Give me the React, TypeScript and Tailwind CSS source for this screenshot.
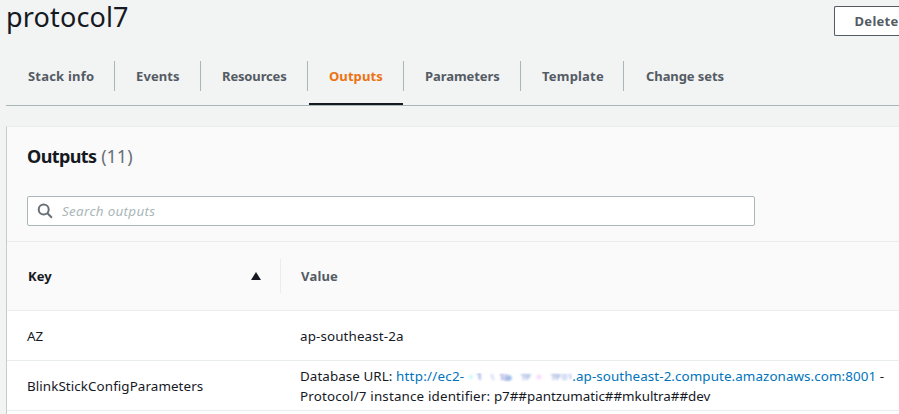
import React from "react";

const tabs = [
  { label: "Stack info", box: "w-[109px] pl-[22px]", text: "tracking-[0.2px]" },
  { label: "Events", box: "w-[86px] pl-[21px]", text: "tracking-[0.1px]" },
  { label: "Resources", box: "w-[107px] pl-[21px]", text: "tracking-[-0.15px]" },
  { label: "Outputs", box: "w-[96px] pl-[21px]", text: "tracking-[0.08px]", active: true },
  { label: "Parameters", box: "w-[117px] pl-[21px]", text: "tracking-[-0.08px]" },
  { label: "Template", box: "w-[103px] pl-[21px]", text: "tracking-[0.2px]" },
  { label: "Change sets", box: "w-[120px] pl-[22px]", text: "tracking-[-0.08px]", last: true },
];

function RedactedHost() {
  return (
    <svg className="inline-block h-[14px] w-[108px] align-[-3px]" viewBox="0 0 108 14">
      <defs>
        <filter id="soft"><feGaussianBlur stdDeviation="1" /></filter>
      </defs>
      <g filter="url(#soft)">
        <ellipse cx="7" cy="7" rx="2" ry="2" fill="#c4f8fc" />
        <path d="M13 4h3v3h-2M16 8v2" fill="none" stroke="#b5c4ec" strokeWidth="2" />
        <path d="M28 4v3l2 3" fill="none" stroke="#cfd9f8" strokeWidth="2" />
        <path d="M36 5h3l-1 4h3M42 4v6h3v-5" fill="none" stroke="#b7b9e6" strokeWidth="2" />
        <ellipse cx="45" cy="8" rx="3" ry="2.5" fill="#9dbfe8" />
        <path d="M57 5h4l-2 5M63 10v-5h4M63 7h3" fill="none" stroke="#bccaea" strokeWidth="2" />
        <ellipse cx="75" cy="7" rx="2.5" ry="2.5" fill="#f8daf9" />
        <path d="M87 5h4l-2 5M93 10v-5h4M93 7h3" fill="none" stroke="#bec9e8" strokeWidth="2" />
        <path d="M99 5h3v4h-3zM104 5h3v3h-2" fill="none" stroke="#cdd7f5" strokeWidth="2" />
      </g>
    </svg>
  );
}

export default function App() {
  return (
    <div className="flex h-[414px] w-[899px] flex-col overflow-hidden bg-[#f2f3f3] pl-[6px] font-['Noto_Sans',sans-serif] text-[13px] leading-5 text-[#16191f]">
      <header className="flex h-[61px] shrink-0 justify-between">
        <h1 className="text-[27px] leading-[33px] tracking-[0.15px]">protocol7</h1>
        <button className="mt-[6px] flex h-[30px] w-[65px] shrink-0 items-center whitespace-nowrap rounded-l-[2px] border border-r-0 border-[#545b64] bg-white pl-[19.5px] font-bold text-[#545b64]">
          <span className="tracking-[0.3px]">Delete</span>
        </button>
      </header>
      <nav className="flex h-[45px] shrink-0 border-b border-[#aab7b8]">
        {tabs.map((t) => (
          <div key={t.label} className={`${t.box} relative h-[30px] shrink-0 whitespace-nowrap font-bold leading-[30px] ${t.last ? "" : "border-r border-[#aab7b8]"} ${t.active ? "text-[#ec7211]" : "text-[#545b64]"}`}>
            <span className={t.text}>{t.label}</span>
            {t.active && <i className="absolute -bottom-[14px] left-px right-0 h-[2px] bg-[#16191f]" />}
          </div>
        ))}
      </nav>
      <main className="mt-5 flex flex-1 flex-col border-l border-t border-l-[#c5cccd] border-t-[#eaeded] bg-white">
        <section className="h-[115px] shrink-0 border-b border-[#eaeded] bg-[#fafafa] pl-5">
          <h2 className="h-[69px] pt-[18px] text-[18px] leading-[22px]">
            <b className="tracking-[-0.6px]">Outputs</b> <span className="text-[#687078]">(11)</span>
          </h2>
          <div className="flex h-[30px] w-[728px] items-center rounded-[2px] border border-[#aab7b8] bg-white pl-[9px]">
            <svg className="h-4 w-4 shrink-0" viewBox="0 0 16 16" fill="none" stroke="#687078" strokeWidth="2">
              <circle cx="6.7" cy="6.5" r="5" />
              <path d="m10.2 10 4.7 4.7" />
            </svg>
            <span className="ml-[9px] text-[13.4px] italic tracking-[0.32px] text-[#aab7b8]">Search outputs</span>
          </div>
        </section>
        <section className="flex h-[69px] shrink-0 items-center border-b border-[#eaeded] bg-[#fafafa] font-bold">
          <div className="flex h-[34px] w-[274px] items-center justify-between border-r border-[#eaeded] pl-[21px] pr-[19px]">
            <span className="tracking-[0.1px]">Key</span>
            <svg className="h-2 w-[10px]" viewBox="0 0 10 8"><path d="M5 0 10 8H0Z" fill="#16191f" /></svg>
          </div>
          <span className="ml-5 tracking-[0.2px] text-[#545b64]">Value</span>
        </section>
        <section className="flex h-[50px] shrink-0 items-center border-b border-[#eaeded] pl-5 text-[13.4px]">
          <div className="w-[273px]">AZ</div>
          <div className="tracking-[0.12px]">ap-southeast-2a</div>
        </section>
        <section className="flex h-[50px] shrink-0 items-center border-b border-[#eaeded] pl-5 text-[13.4px]">
          <div className="w-[273px] shrink-0 tracking-[0.08px]">BlinkStickConfigParameters</div>
          <div className="whitespace-nowrap">
            <div className="h-5"><span className="tracking-[0.07px]">Database URL: </span><a className="text-[#0073bb]"><span className="tracking-[0.24px]">http://ec2-</span><RedactedHost /><span className="tracking-[0.08px]">.ap-southeast-2.compute.amazonaws.com:8001</span></a><span> -</span></div>
            <div className="h-5"><span className="tracking-[0.16px]">Protocol/7 instance identifier: </span><span className="tracking-[-0.03px]">p7##pantzumatic##mkultra##dev</span></div>
          </div>
        </section>
      </main>
    </div>
  );
}
